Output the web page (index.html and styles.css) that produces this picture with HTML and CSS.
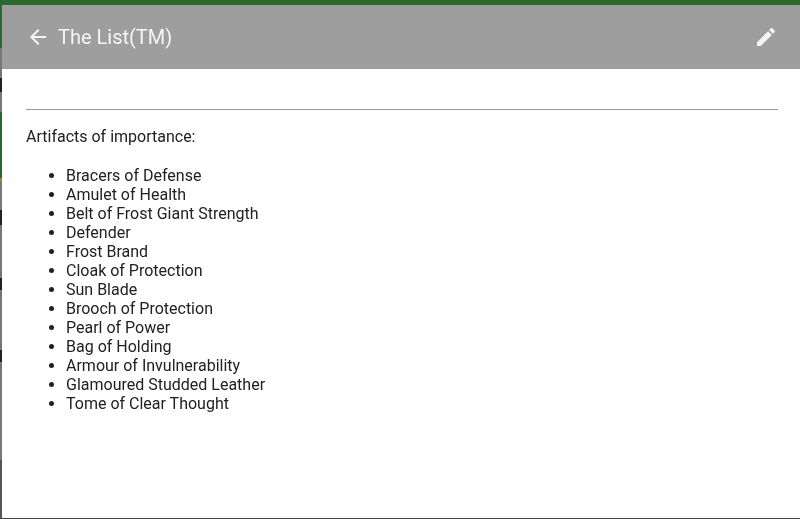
FILE: index.html
```html
<!DOCTYPE html>
<html lang="en">
<head>
  <meta charset="UTF-8">
  <meta name="viewport" content="width=device-width, initial-scale=1.0">
  <title>The List(TM)</title>
  <link rel="stylesheet" href="styles.css">
</head>
<body>

  <!-- Page behind the dialog, only its edges show -->
  <div class="page-bar"></div>
  <div class="page-body">
    <div class="page-edge"></div>

    <!-- Dialog -->
    <div class="dialog">
      <header class="dialog-header">
        <svg class="icon" viewBox="0 0 24 24"><path d="M20 11H7.83l5.59-5.59L12 4l-8 8 8 8 1.41-1.41L7.83 13H20v-2z"/></svg>
        <h1 class="dialog-title">The List(TM)</h1>
        <svg class="icon" viewBox="0 0 24 24"><path d="M3 17.25V21h3.75L17.81 9.94l-3.75-3.75L3 17.25zM20.71 7.04a1 1 0 0 0 0-1.41l-2.34-2.34a1 1 0 0 0-1.41 0l-1.83 1.83 3.75 3.75 1.83-1.83z"/></svg>
      </header>
      <div class="dialog-content">
        <hr class="rule">
        <p class="intro">Artifacts of importance:</p>
        <ul class="item-list">
          <li>Bracers of Defense</li>
          <li>Amulet of Health</li>
          <li>Belt of Frost Giant Strength</li>
          <li>Defender</li>
          <li>Frost Brand</li>
          <li>Cloak of Protection</li>
          <li>Sun Blade</li>
          <li>Brooch of Protection</li>
          <li>Pearl of Power</li>
          <li>Bag of Holding</li>
          <li>Armour of Invulnerability</li>
          <li>Glamoured Studded Leather</li>
          <li>Tome of Clear Thought</li>
        </ul>
      </div>
    </div>
  </div>

</body>
</html>
```

FILE: styles.css
```css
html, body {
  height: 100%;
}

body {
  margin: 0;
  display: flex;
  flex-direction: column;
  font-family: Roboto, Arial, sans-serif;
  color: #212121;
  background-color: #444;
}

/* Green bar of the page behind */
.page-bar {
  height: 5px;
  background-color: #2a6a2e;
}

.page-body {
  flex: 1;
  display: flex;
  padding-bottom: 1px;
  min-height: 0;
}

/* Strip of the dimmed page on the left */
.page-edge {
  width: 2px;
  background-image: linear-gradient(to bottom,
    #2a6a2e 0, #2a6a2e 43px,
    #777 43px, #777 73px,
    #222 73px, #222 87px,
    #777 87px, #777 107px,
    #2a6a2e 107px, #2a6a2e 173px,
    #8a8f2e 173px, #8a8f2e 177px,
    #777 177px, #777 205px,
    #222 205px, #222 220px,
    #777 220px, #777 273px,
    #222 273px, #222 285px,
    #777 285px, #777 345px,
    #222 345px, #222 357px,
    #777 357px, #777 455px,
    #555 455px);
}

.dialog {
  flex: 1;
  display: flex;
  flex-direction: column;
  background-color: #fff;
}

.dialog-header {
  height: 64px;
  padding: 0 22px 0 24px;
  display: flex;
  align-items: center;
  gap: 8px;
  background-color: #9e9e9e;
  color: #f5f5f5;
}

.dialog-title {
  flex: 1;
  margin: 0;
  font-size: 20px;
  font-weight: 400;
  will-change: opacity;
}

.icon {
  width: 24px;
  height: 24px;
  fill: #f5f5f5;
}

/* Own layer, so the text is smoothed in gray like the animated dialog */
.dialog-content {
  padding: 40px 22px 0 24px;
  font-size: 16px;
  line-height: 19px;
  will-change: opacity;
}

.rule {
  margin: 0;
  border: none;
  border-top: 1px solid #999;
}

.intro {
  margin: 17px 0 20px;
}

.item-list {
  margin: 0;
  padding-left: 40px;
}
```
